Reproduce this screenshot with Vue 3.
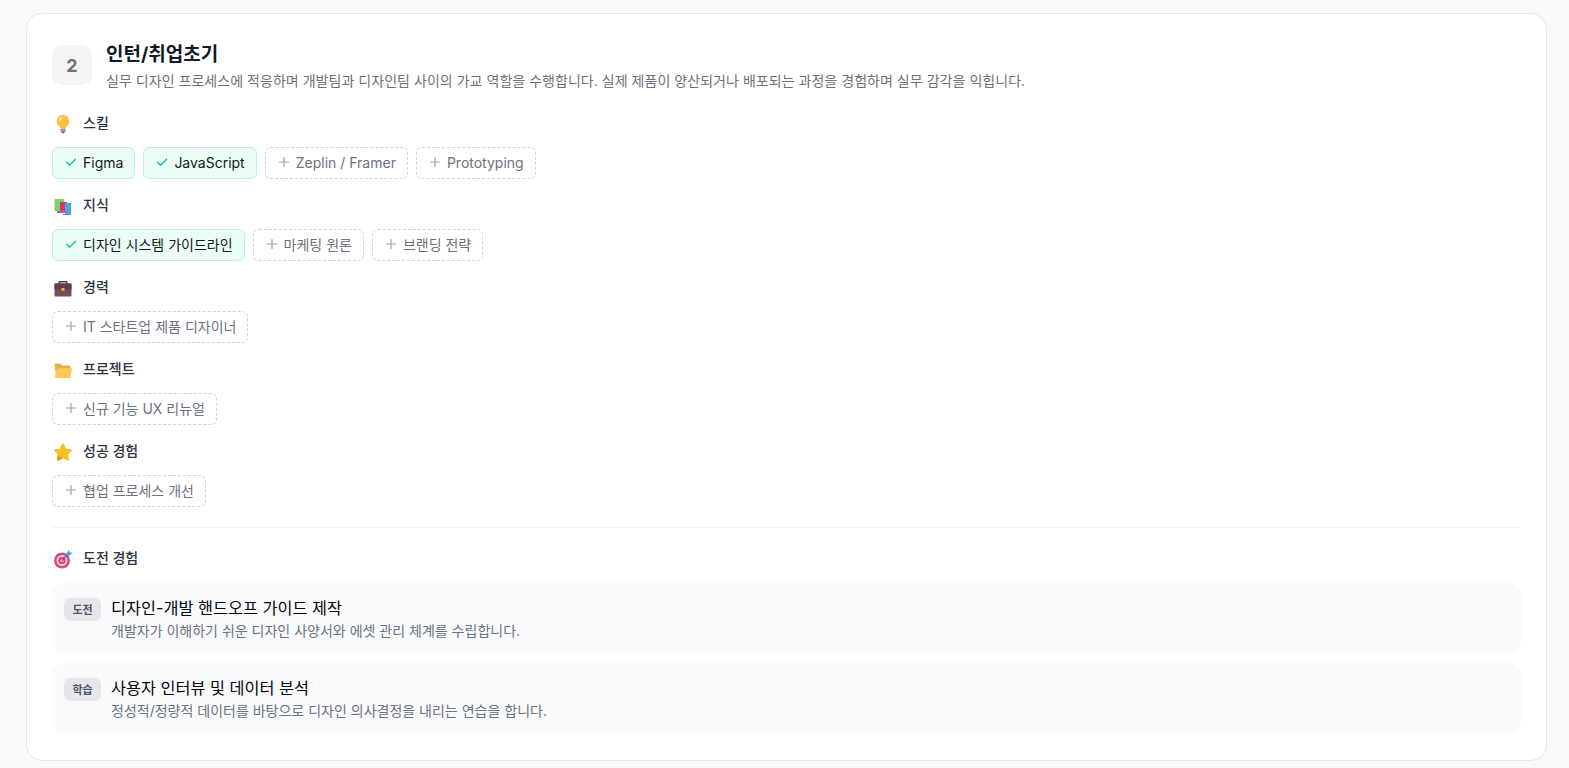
<script setup>
const groups = [
  {
    title: '스킬',
    icon: 'bulb',
    chips: [
      { label: 'Figma', done: true },
      { label: 'JavaScript', done: true },
      { label: 'Zeplin / Framer' },
      { label: 'Prototyping' }
    ]
  },
  {
    title: '지식',
    icon: 'books',
    chips: [
      { label: '디자인 시스템 가이드라인', done: true },
      { label: '마케팅 원론' },
      { label: '브랜딩 전략' }
    ]
  },
  { title: '경력', icon: 'case', chips: [{ label: 'IT 스타트업 제품 디자이너' }] },
  { title: '프로젝트', icon: 'folder', chips: [{ label: '신규 기능 UX 리뉴얼' }] },
  { title: '성공 경험', icon: 'star', chips: [{ label: '협업 프로세스 개선' }] }
]

const challenges = [
  { tag: '도전', title: '디자인-개발 핸드오프 가이드 제작', desc: '개발자가 이해하기 쉬운 디자인 사양서와 에셋 관리 체계를 수립합니다.' },
  { tag: '학습', title: '사용자 인터뷰 및 데이터 분석', desc: '정성적/정량적 데이터를 바탕으로 디자인 의사결정을 내리는 연습을 합니다.' }
]
</script>

<template>
  <main class="page">
    <section class="card">
      <header class="head">
        <div class="step">2</div>
        <div class="head-text">
          <h2>인턴/취업초기</h2>
          <p>실무 디자인 프로세스에 적응하며 개발팀과 디자인팀 사이의 가교 역할을 수행합니다. 실제 제품이 양산되거나 배포되는 과정을 경험하며 실무 감각을 익힙니다.</p>
        </div>
      </header>

      <div v-for="group in groups" :key="group.title" class="group">
        <div class="label">
          <svg class="emoji" viewBox="0 0 20 20">
            <template v-if="group.icon === 'bulb'">
              <path d="M10 1a6.200 6.200 0 0 0-3.700 11.200c.8.700 1.200 1.500 1.300 2.500h4.800c.1-1 .5-1.800 1.300-2.500A6.200 6.200 0 0 0 10 1z" fill="#fbbf47" />
              <path d="M7.800 3a4.300 4.300 0 0 0-2.200 3.700c0 .9.500 1.100 1 .6C7.400 6.100 8.400 4.900 9.200 3.900 9.700 3.100 8.700 2.600 7.800 3z" fill="#fee6a0" />
              <rect x="7.600" y="14.700" width="4.800" height="3.600" rx=".6" fill="#a48bb0" />
              <rect x="8.500" y="18" width="3" height="1.200" rx=".6" fill="#6f5a7c" />
            </template>
            <template v-else-if="group.icon === 'books'">
              <rect x="1.500" y="3" width="9.500" height="12" fill="#86cf68" />
              <rect x="7" y="6" width="7" height="11" fill="#d8386a" />
              <rect x="12" y="7" width="6" height="11" fill="#45a9e6" />
              <rect x="4" y="15" width="9" height="2" fill="#9a6bb0" />
              <rect x="10" y="18" width="8" height="1" fill="#8a7cc0" />
            </template>
            <template v-else-if="group.icon === 'case'">
              <path d="M7 6V4.500h6V6h1.500V4.300c0-.9-.6-1.300-1.300-1.300H6.800c-.7 0-1.300.4-1.300 1.300V6z" fill="#5a3a48" />
              <rect x="1.500" y="5.500" width="17" height="13" rx="1" fill="#7a4a5a" />
              <rect x="1.500" y="5.500" width="17" height="6" rx="1" fill="#653c4c" />
              <rect x="8.500" y="10" width="3" height="2.800" rx=".5" fill="#e8b25a" />
            </template>
            <template v-else-if="group.icon === 'folder'">
              <path d="M1.500 5c0-.8.6-1.400 1.400-1.400h4.200l1.800 2h7.200c.8 0 1.400.6 1.400 1.400v8.500H3z" fill="#f0ae3c" />
              <path d="M4.800 8.200h13.300c.7 0 1.100.5 1 1.200l-1.700 7.500c-.2.600-.6 1-1.200 1H2.900c-.8 0-1.300-.7-1.100-1.400l1.800-7.300c.2-.6.600-1 1.200-1z" fill="#fdc95c" />
            </template>
            <template v-else-if="group.icon === 'star'">
              <path d="M10 1.500c.5 0 .9.300 1.100.8l2 4.400 4.700.6c1 .1 1.400 1.300.7 2l-3.500 3.300.9 4.800c.2 1-.8 1.700-1.700 1.200L10 16.300l-4.200 2.300c-.9.500-1.900-.2-1.700-1.200l.9-4.800-3.500-3.300c-.7-.7-.3-1.900.7-2l4.700-.6 2-4.400c.2-.5.600-.8 1.100-.8z" fill="#f5c022" />
              <path d="M10 16.300l-4.200 2.300c-.9.500-1.900-.2-1.700-1.200l.9-4.800c1 2 3 3.300 5 3.700z" fill="#dd9a1c" />
            </template>
          </svg>
          <span>{{ group.title }}</span>
        </div>
        <div class="chips">
          <span v-for="chip in group.chips" :key="chip.label" class="chip" :class="{ done: chip.done }">
            <svg v-if="chip.done" class="chip-icon" viewBox="0 0 12 12" fill="none" stroke="#10c98a" stroke-width="1.400" stroke-linecap="round" stroke-linejoin="round">
              <path d="M1.500 6.200 4.500 9.200 10.500 3.200" />
            </svg>
            <svg v-else class="chip-icon" viewBox="0 0 12 12" fill="none" stroke="#9ca3af" stroke-width="1.200" stroke-linecap="round">
              <path d="M6 1.500v9M1.500 6h9" />
            </svg>
            {{ chip.label }}
          </span>
        </div>
      </div>

      <hr class="divider" />

      <div class="label challenge-label">
        <svg class="emoji" viewBox="0 0 20 20">
          <circle cx="9" cy="11.500" r="8" fill="#e0447c" />
          <circle cx="9" cy="11.500" r="5.500" fill="#f6c8d8" />
          <circle cx="9" cy="11.500" r="3.500" fill="#d83a72" />
          <circle cx="9" cy="11.500" r="1.500" fill="#f6c8d8" />
          <path d="M9 11.500 15.500 5" stroke="#3b6fb0" stroke-width="1.300" />
          <path d="M13.500 4.300 16 1l.7 2.300 2.800.7-3.200 2.600-2.600-.4z" fill="#3ba4ee" />
        </svg>
        <span>도전 경험</span>
      </div>
      <div class="items">
        <article v-for="item in challenges" :key="item.tag" class="item">
          <span class="tag">{{ item.tag }}</span>
          <div>
            <h3>{{ item.title }}</h3>
            <p>{{ item.desc }}</p>
          </div>
        </article>
      </div>
    </section>
  </main>
</template>

<style>
html, body {
  background: #f9f9f9;
}
</style>

<style scoped>
.page {
  padding: 13px 22px 7px 26px;
  font-family: Inter, "Noto Sans CJK KR", sans-serif;
  color: #111827;
}

.card {
  background: #fff;
  border: 1px solid #e5e7eb;
  border-radius: 16px;
  padding: 25px;
  height: 748px;
  box-sizing: border-box;
}

.head {
  display: flex;
  gap: 14px;
  margin-top: 6px;
  margin-bottom: 20px;
}

.step {
  width: 40px;
  height: 40px;
  border-radius: 10px;
  background: #f3f4f6;
  color: #6b7280;
  font-size: 18px;
  font-weight: 700;
  display: flex;
  align-items: center;
  justify-content: center;
}

.head-text h2 {
  margin: -1px 0 0;
  font-size: 19px;
  line-height: 22px;
  font-weight: 700;
  color: #111827;
}

.head-text p {
  margin: 5px 0 0;
  font-size: 14px;
  line-height: 20px;
  letter-spacing: 0.035px;
  color: #6b7280;
}

.group {
  margin-bottom: 14px;
}

.label {
  display: flex;
  align-items: center;
  gap: 10px;
  height: 22px;
  margin-bottom: 14px;
  font-size: 14px;
  font-weight: 500;
  color: #2b3544;
}

.emoji {
  width: 20px;
  height: 20px;
  margin-left: 1px;
  margin-top: 3px;
}

.chips {
  display: flex;
  flex-wrap: wrap;
  gap: 8px;
}

.chip {
  display: inline-flex;
  align-items: center;
  gap: 6px;
  height: 32px;
  box-sizing: border-box;
  padding: 0 11px 2px 12px;
  border: 1px dashed #d1d5db;
  border-radius: 6px;
  font-size: 14px;
  color: #6b7280;
}

.chip.done {
  background: #ecfdf5;
  border: 1px solid #b9f5d8;
  color: #111827;
}

.chip-icon {
  width: 12px;
  height: 12px;
  flex: none;
}

.divider {
  border: 0;
  border-top: 1px solid #f3f4f6;
  margin: 20px 0 18px;
}

.challenge-label {
  margin-bottom: 15px;
}

.items {
  display: flex;
  flex-direction: column;
  gap: 8px;
}

.item {
  display: flex;
  gap: 10px;
  height: 72px;
  box-sizing: border-box;
  padding: 12px;
  background: #f9fafb;
  border-radius: 12px;
}

.tag {
  flex: none;
  margin-top: 3px;
  width: 37px;
  height: 23px;
  padding-bottom: 2px;
  box-sizing: border-box;
  border-radius: 6px;
  background: #e5e7eb;
  color: #4b5563;
  font-size: 11px;
  font-weight: 600;
  display: flex;
  align-items: center;
  justify-content: center;
}

.item h3 {
  margin: 0;
  font-size: 16.3px;
  line-height: 26px;
  font-weight: 400;
  color: #030712;
}

.item p {
  margin: 0;
  font-size: 14px;
  line-height: 20px;
  color: #6b7280;
}
</style>
